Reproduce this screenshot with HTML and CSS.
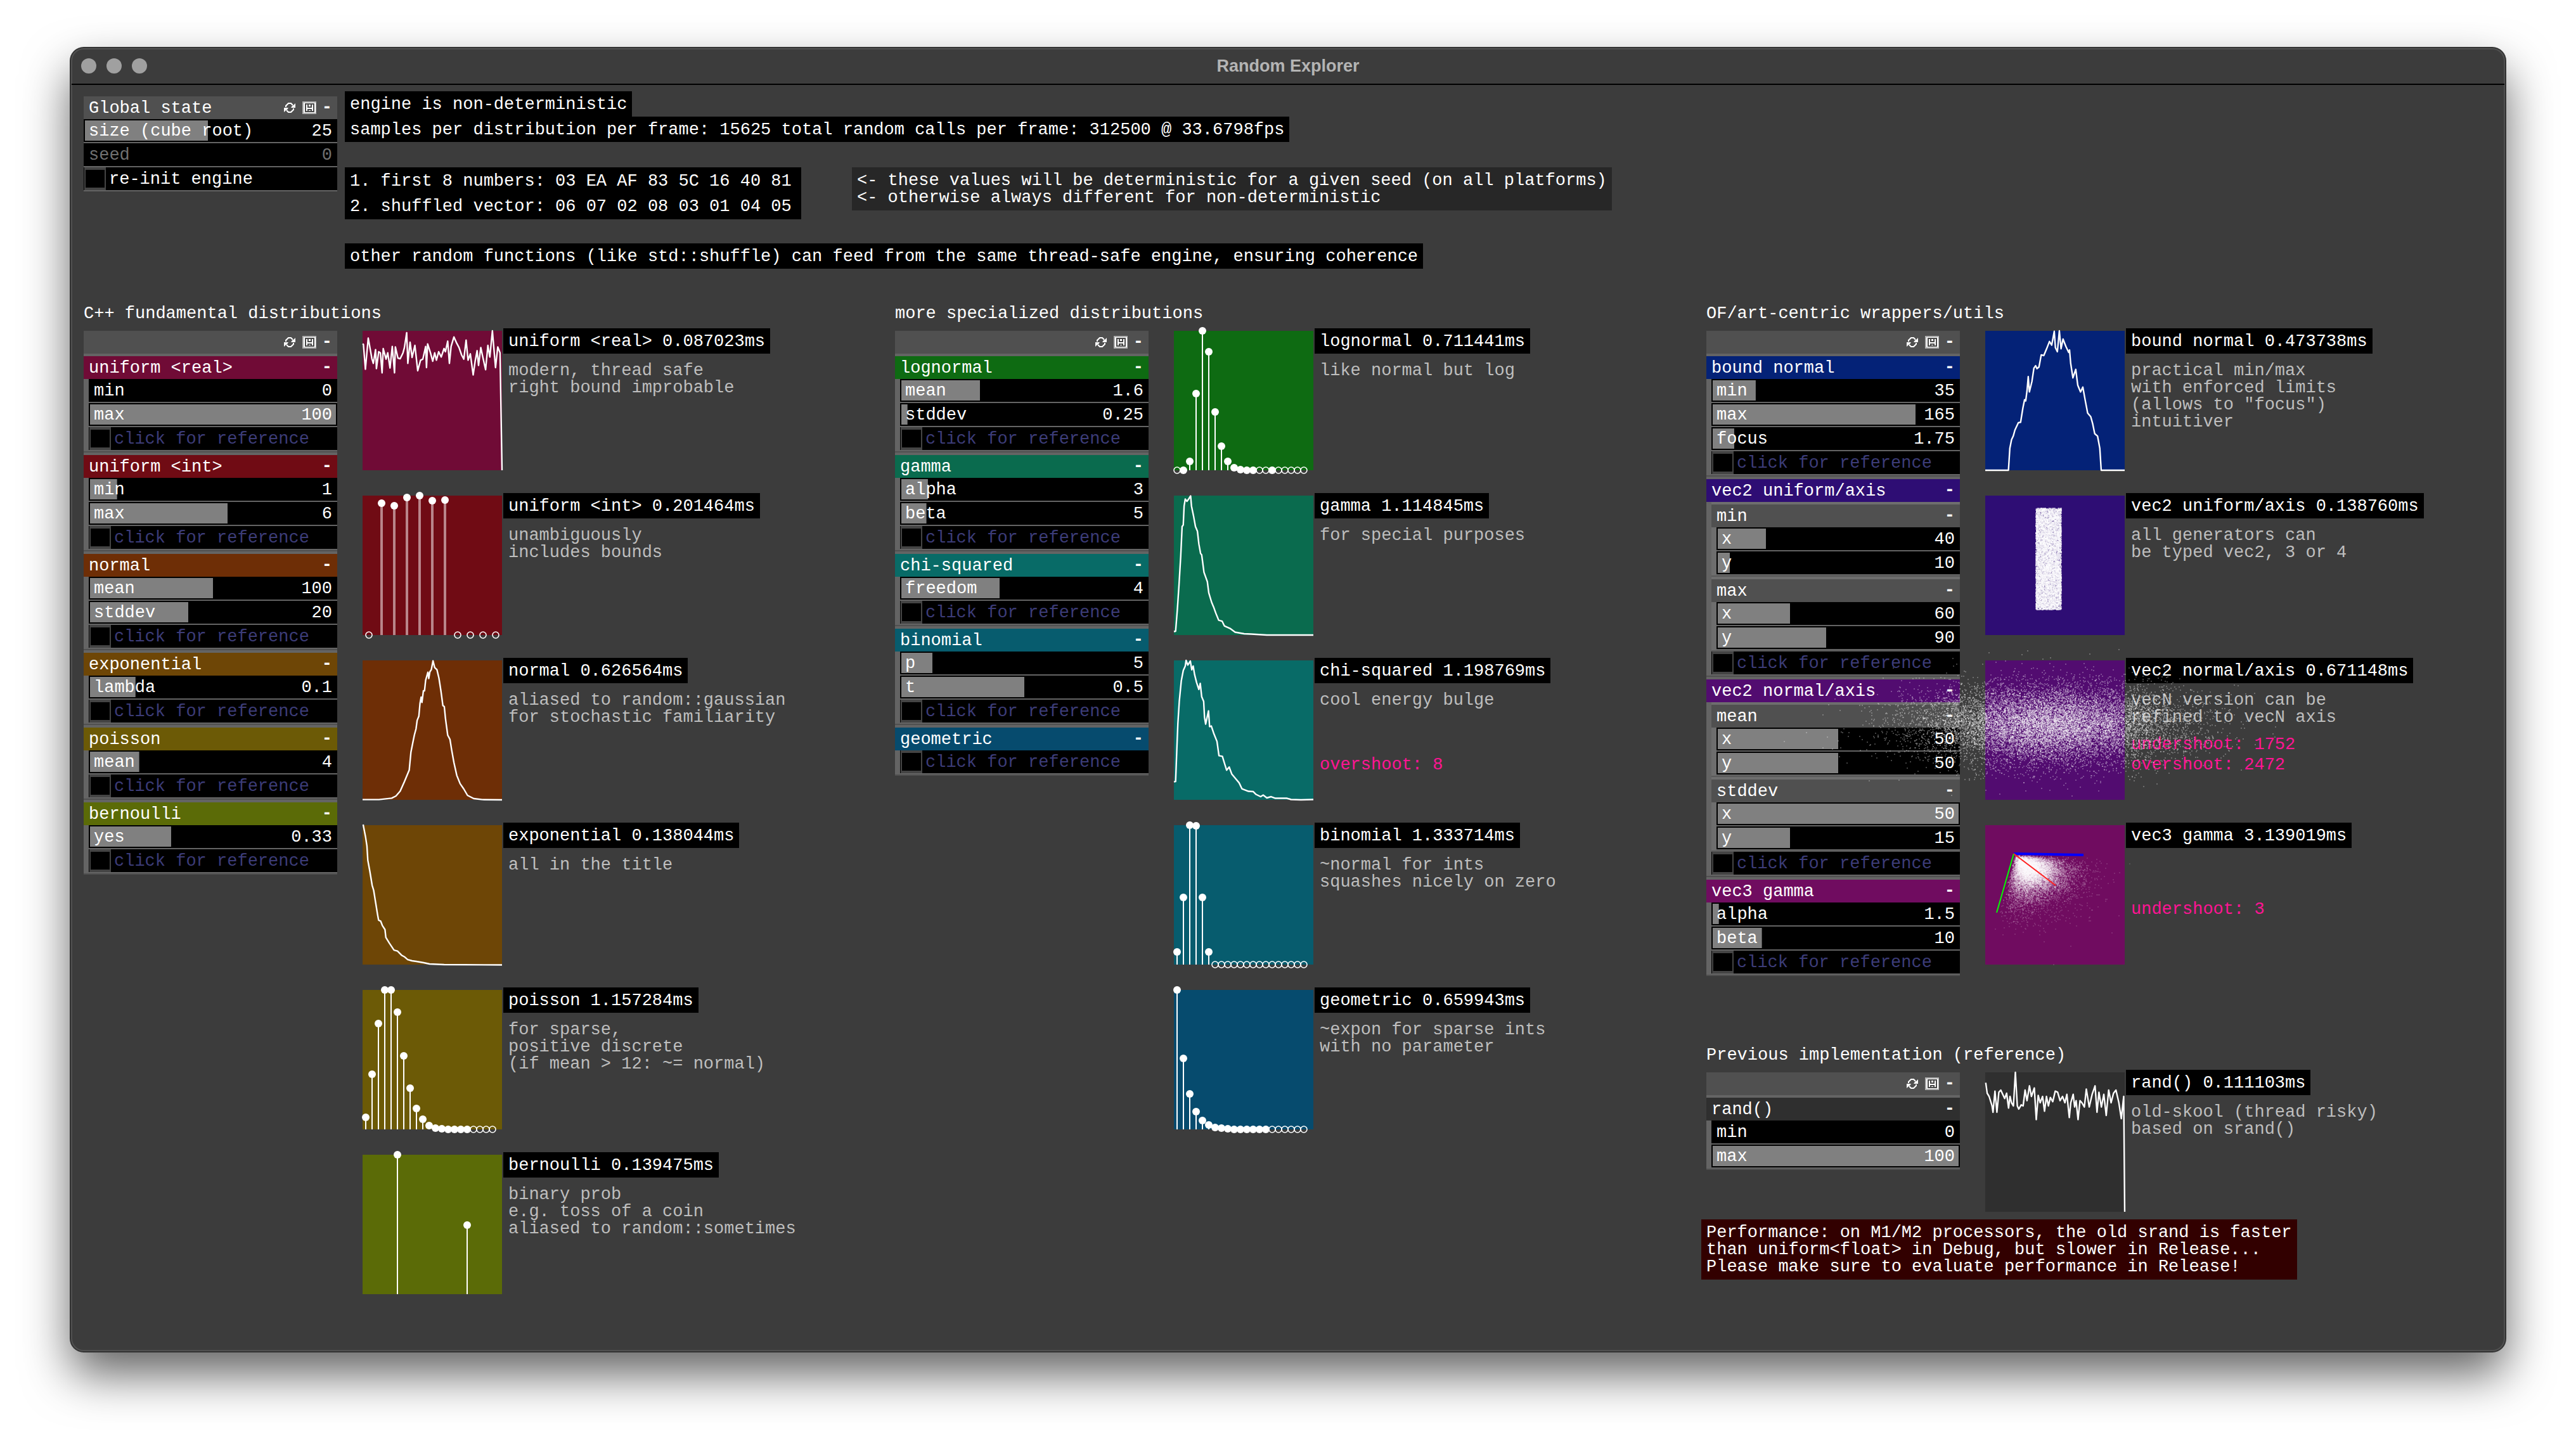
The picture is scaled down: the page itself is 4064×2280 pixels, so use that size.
FILE: index.html
```html
<!DOCTYPE html>
<html lang="en">
<head>
<meta charset="utf-8">
<title>Random Explorer</title>
<link rel="stylesheet" href="styles.css">
</head>
<body>
<svg class="sprite" aria-hidden="true">
  <symbol id="icon-refresh" viewBox="0 0 22 20">
    <path d="M5 9V7L9 3h4l3 3M17 11v2l-4 4H9l-3-3" fill="none" stroke="#fff" stroke-width="2"/>
    <path d="M20 3v7h-7l2-3 2-1zM2 17v-7h7l-2 3-2 1z" fill="#fff"/>
  </symbol>
  <symbol id="icon-save" viewBox="0 0 22 20">
    <path d="M0 0h22v20H0z" fill="#b0b0b0"/>
    <path d="M2 2h19v16H2z" fill="#fff"/>
    <path d="M5 4h13v12H5zM9 4v5h5V4M9 16v-3h5v3" fill="none" stroke="#4a4a4a" stroke-width="2"/>
  </symbol>
</svg>

<div class="window">
  <header class="titlebar">
    <div class="lights">
      <button type="button" aria-label="Close"></button>
      <button type="button" aria-label="Minimize"></button>
      <button type="button" aria-label="Zoom"></button>
    </div>
    <h1>Random Explorer</h1>
  </header>

  <main>
    <section class="intro">
      <div class="panel">
        <div class="bar"><h3>Global state</h3><button type="button" aria-label="Reload"><svg><use href="#icon-refresh"/></svg></button><button type="button" aria-label="Save"><svg><use href="#icon-save"/></svg></button><button type="button" class="fold">-</button></div>
        <label class="row"><input type="range" min="1" max="50" value="25" style="--v:49%"><span>size (cube root)</span><output>25</output></label>
        <label class="row off"><input type="range" disabled value="0" style="--v:0%"><span>seed</span><output>0</output></label>
        <label class="row tick plain"><input type="checkbox"><span>re-init engine</span></label>
      </div>
      <div class="facts">
        <p class="box">engine is non-deterministic</p>
        <p class="box">samples per distribution per frame: 15625 total random calls per frame: 312500 @ 33.6798fps</p>
        <div class="pair">
          <p class="box seq">1. first 8 numbers: 03 EA AF 83 5C 16 40 81<br>2. shuffled vector: 06 07 02 08 03 01 04 05</p>
          <p class="note">&lt;- these values will be deterministic for a given seed (on all platforms)<br>&lt;- otherwise always different for non-deterministic</p>
        </div>
        <p class="box">other random functions (like std::shuffle) can feed from the same thread-safe engine, ensuring coherence</p>
      </div>
    </section>

    <div class="columns">
      <section class="column">
        <h2>C++ fundamental distributions</h2>
        <div class="split">
          <div class="panel">
            <div class="bar"><h3></h3><button type="button" aria-label="Reload"><svg><use href="#icon-refresh"/></svg></button><button type="button" aria-label="Save"><svg><use href="#icon-save"/></svg></button><button type="button" class="fold">-</button></div>
            <div class="group">
              <div class="bar c-real"><h3>uniform &lt;real&gt;</h3><button type="button" class="fold">-</button></div>
              <div class="rows">
                <label class="row"><input type="range" value="0" style="--v:0%"><span>min</span><output>0</output></label>
                <label class="row"><input type="range" value="100" style="--v:100%"><span>max</span><output>100</output></label>
                <label class="row tick"><input type="checkbox"><span>click for reference</span></label>
              </div>
            </div>
            <div class="group">
              <div class="bar c-int"><h3>uniform &lt;int&gt;</h3><button type="button" class="fold">-</button></div>
              <div class="rows">
                <label class="row"><input type="range" value="11" style="--v:11%"><span>min</span><output>1</output></label>
                <label class="row"><input type="range" value="56" style="--v:56%"><span>max</span><output>6</output></label>
                <label class="row tick"><input type="checkbox"><span>click for reference</span></label>
              </div>
            </div>
            <div class="group">
              <div class="bar c-normal"><h3>normal</h3><button type="button" class="fold">-</button></div>
              <div class="rows">
                <label class="row"><input type="range" value="50" style="--v:50%"><span>mean</span><output>100</output></label>
                <label class="row"><input type="range" value="40" style="--v:40%"><span>stddev</span><output>20</output></label>
                <label class="row tick"><input type="checkbox"><span>click for reference</span></label>
              </div>
            </div>
            <div class="group">
              <div class="bar c-expo"><h3>exponential</h3><button type="button" class="fold">-</button></div>
              <div class="rows">
                <label class="row"><input type="range" value="18" style="--v:18.5%"><span>lambda</span><output>0.1</output></label>
                <label class="row tick"><input type="checkbox"><span>click for reference</span></label>
              </div>
            </div>
            <div class="group">
              <div class="bar c-poisson"><h3>poisson</h3><button type="button" class="fold">-</button></div>
              <div class="rows">
                <label class="row"><input type="range" value="20" style="--v:20%"><span>mean</span><output>4</output></label>
                <label class="row tick"><input type="checkbox"><span>click for reference</span></label>
              </div>
            </div>
            <div class="group">
              <div class="bar c-bern"><h3>bernoulli</h3><button type="button" class="fold">-</button></div>
              <div class="rows">
                <label class="row"><input type="range" value="33" style="--v:33%"><span>yes</span><output>0.33</output></label>
                <label class="row tick"><input type="checkbox"><span>click for reference</span></label>
              </div>
            </div>
          </div>
          <div class="plots">
            <figure>
              <svg class="plot c-real" viewBox="1057 186 493 660" preserveAspectRatio="none"><polyline points="1057,248 1060,250 1067,368 1077,220 1090,318 1095,340 1103,275 1106,365 1114,285 1120,290 1126,385 1130,270 1140,320 1146,290 1154,362 1162,260 1170,385 1173,262 1182,315 1190,318 1200,290 1205,265 1213,195 1217,340 1225,240 1232,312 1242,255 1252,375 1262,325 1270,320 1280,260 1283,360 1287,248 1297,290 1305,330 1312,290 1318,325 1326,285 1335,310 1345,270 1350,285 1358,235 1364,340 1370,260 1380,215 1390,245 1398,265 1407,300 1415,320 1423,230 1430,325 1438,295 1448,395 1455,330 1462,280 1467,350 1475,265 1482,310 1492,370 1500,255 1507,310 1516,186 1520,250 1527,360 1535,262 1543,290 1550,846"/></svg>
              <figcaption><h4>uniform &lt;real&gt; 0.087023ms</h4><p>modern, thread safe<br>right bound improbable</p></figcaption>
            </figure>
            <figure>
              <svg class="plot c-int" viewBox="0 0 220 220" data-step="20" data-width="4" data-tops="-,12,16,3,0,8,7,-,-,-,-"></svg>
              <figcaption><h4>uniform &lt;int&gt; 0.201464ms</h4><p>unambiguously<br>includes bounds</p></figcaption>
            </figure>
            <figure>
              <svg class="plot c-normal" viewBox="1057 426 493 660" preserveAspectRatio="none"><polyline points="1057,1085 1115,1085 1160,1078 1175,1068 1190,1045 1205,1000 1222,945 1228,860 1234,820 1240,780 1246,750 1250,710 1256,690 1260,630 1264,600 1267,625 1272,570 1276,570 1280,520 1288,482 1291,512 1295,480 1300,470 1306,428 1312,460 1320,470 1327,510 1334,570 1341,640 1346,645 1350,700 1358,780 1366,800 1372,850 1380,910 1390,970 1402,1010 1415,1035 1428,1065 1450,1080 1480,1085 1550,1086"/></svg>
              <figcaption><h4>normal 0.626564ms</h4><p>aliased to random::gaussian<br>for stochastic familiarity</p></figcaption>
            </figure>
            <figure>
              <svg class="plot c-expo" viewBox="70 44 479 442" preserveAspectRatio="none"><polyline points="72,42 80,80 85,110 88,155 95,190 103,235 108,250 115,290 122,330 125,345 132,348 138,362 147,375 150,400 162,418 178,440 190,443 205,457 215,462 225,470 240,474 255,476 280,480 300,484 350,486 549,487"/></svg>
              <figcaption><h4>exponential 0.138044ms</h4><p>all in the title</p></figcaption>
            </figure>
            <figure>
              <svg class="plot c-poisson" viewBox="0 0 220 220" data-step="10" data-width="2" data-tops="201,133,53,0,0,35,104,155,187,204,214,218,219,220,220,220,220,-,-,-,-"></svg>
              <figcaption><h4>poisson 1.157284ms</h4><p>for sparse,<br>positive discrete<br>(if mean &gt; 12: ~= normal)</p></figcaption>
            </figure>
            <figure>
              <svg class="plot c-bern" viewBox="0 0 220 220" data-step="110" data-width="2" data-tops="0,111"></svg>
              <figcaption><h4>bernoulli 0.139475ms</h4><p>binary prob<br>e.g. toss of a coin<br>aliased to random::sometimes</p></figcaption>
            </figure>
          </div>
        </div>
      </section>

      <section class="column">
        <h2>more specialized distributions</h2>
        <div class="split">
          <div class="panel">
            <div class="bar"><h3></h3><button type="button" aria-label="Reload"><svg><use href="#icon-refresh"/></svg></button><button type="button" aria-label="Save"><svg><use href="#icon-save"/></svg></button><button type="button" class="fold">-</button></div>
            <div class="group">
              <div class="bar c-logn"><h3>lognormal</h3><button type="button" class="fold">-</button></div>
              <div class="rows">
                <label class="row"><input type="range" value="32" style="--v:32%"><span>mean</span><output>1.6</output></label>
                <label class="row"><input type="range" value="2" style="--v:2.5%"><span>stddev</span><output>0.25</output></label>
                <label class="row tick"><input type="checkbox"><span>click for reference</span></label>
              </div>
            </div>
            <div class="group">
              <div class="bar c-gamma"><h3>gamma</h3><button type="button" class="fold">-</button></div>
              <div class="rows">
                <label class="row"><input type="range" value="11" style="--v:10.8%"><span>alpha</span><output>3</output></label>
                <label class="row"><input type="range" value="10" style="--v:10.2%"><span>beta</span><output>5</output></label>
                <label class="row tick"><input type="checkbox"><span>click for reference</span></label>
              </div>
            </div>
            <div class="group">
              <div class="bar c-chi"><h3>chi-squared</h3><button type="button" class="fold">-</button></div>
              <div class="rows">
                <label class="row"><input type="range" value="40" style="--v:40%"><span>freedom</span><output>4</output></label>
                <label class="row tick"><input type="checkbox"><span>click for reference</span></label>
              </div>
            </div>
            <div class="group">
              <div class="bar c-bino"><h3>binomial</h3><button type="button" class="fold">-</button></div>
              <div class="rows">
                <label class="row"><input type="range" value="13" style="--v:12.7%"><span>p</span><output>5</output></label>
                <label class="row"><input type="range" value="50" style="--v:50%"><span>t</span><output>0.5</output></label>
                <label class="row tick"><input type="checkbox"><span>click for reference</span></label>
              </div>
            </div>
            <div class="group">
              <div class="bar c-geom"><h3>geometric</h3><button type="button" class="fold">-</button></div>
              <div class="rows">
                <label class="row tick"><input type="checkbox"><span>click for reference</span></label>
              </div>
            </div>
          </div>
          <div class="plots">
            <figure>
              <svg class="plot c-logn" viewBox="0 0 220 220" data-step="10" data-width="2" data-tops="-,220,206,99,0,33,128,182,206,216,219,220,220,-,-,220,-,-,-,-,-"></svg>
              <figcaption><h4>lognormal 0.711441ms</h4><p>like normal but log</p></figcaption>
            </figure>
            <figure>
              <svg class="plot c-gamma" viewBox="72 567 492 442" preserveAspectRatio="none"><polyline points="72,998 78,997 84,930 90,850 96,760 101,665 105,660 108,600 112,578 118,585 124,578 131,568 134,600 142,635 148,665 155,680 160,720 166,750 170,755 173,775 178,810 190,840 195,875 205,905 212,920 220,940 230,962 242,965 250,980 270,988 288,1000 320,1005 345,1006 400,1009 564,1009"/></svg>
              <figcaption><h4>gamma 1.114845ms</h4><p>for special purposes</p></figcaption>
            </figure>
            <figure>
              <svg class="plot c-chi" viewBox="72 1090 492 442" preserveAspectRatio="none"><polyline points="72,1475 78,1474 82,1380 86,1290 91,1220 98,1155 105,1122 112,1108 115,1090 121,1105 130,1092 135,1120 140,1108 145,1135 152,1160 160,1182 165,1163 170,1205 177,1220 180,1270 184,1292 194,1250 198,1300 204,1298 212,1320 224,1347 231,1392 243,1394 250,1415 258,1438 267,1428 276,1450 290,1465 302,1478 312,1497 335,1505 352,1506 362,1515 378,1522 387,1517 400,1526 415,1522 430,1527 470,1527 485,1531 520,1532 564,1531"/></svg>
              <figcaption><h4>chi-squared 1.198769ms</h4><p>cool energy bulge</p><ul><li class="over">overshoot: 8</li></ul></figcaption>
            </figure>
            <figure>
              <svg class="plot c-bino" viewBox="0 0 220 220" data-step="10" data-width="2" data-tops="200,114,0,1,114,200,-,-,-,-,-,-,-,-,-,-,-,-,-,-,-"></svg>
              <figcaption><h4>binomial 1.333714ms</h4><p>~normal for ints<br>squashes nicely on zero</p></figcaption>
            </figure>
            <figure>
              <svg class="plot c-geom" viewBox="0 0 220 220" data-step="10" data-width="2" data-tops="0,108,164,192,206,213,217,218,219,220,220,220,220,220,220,-,-,-,-,-,-"></svg>
              <figcaption><h4>geometric 0.659943ms</h4><p>~expon for sparse ints<br>with no parameter</p></figcaption>
            </figure>
          </div>
        </div>
      </section>

      <section class="column">
        <h2>OF/art-centric wrappers/utils</h2>
        <div class="split">
          <div class="panel">
            <div class="bar"><h3></h3><button type="button" aria-label="Reload"><svg><use href="#icon-refresh"/></svg></button><button type="button" aria-label="Save"><svg><use href="#icon-save"/></svg></button><button type="button" class="fold">-</button></div>
            <div class="group">
              <div class="bar c-bound"><h3>bound normal</h3><button type="button" class="fold">-</button></div>
              <div class="rows">
                <label class="row"><input type="range" value="17" style="--v:17.5%"><span>min</span><output>35</output></label>
                <label class="row"><input type="range" value="82" style="--v:82.5%"><span>max</span><output>165</output></label>
                <label class="row"><input type="range" value="9" style="--v:8.75%"><span>focus</span><output>1.75</output></label>
                <label class="row tick"><input type="checkbox"><span>click for reference</span></label>
              </div>
            </div>
            <div class="group">
              <div class="bar c-vecu"><h3>vec2 uniform/axis</h3><button type="button" class="fold">-</button></div>
              <div class="rows">
                <div class="group nested">
                  <div class="bar"><h3>min</h3><button type="button" class="fold">-</button></div>
                  <div class="rows">
                    <label class="row"><input type="range" value="20" style="--v:20%"><span>x</span><output>40</output></label>
                    <label class="row"><input type="range" value="5" style="--v:5%"><span>y</span><output>10</output></label>
                  </div>
                </div>
                <div class="group nested">
                  <div class="bar"><h3>max</h3><button type="button" class="fold">-</button></div>
                  <div class="rows">
                    <label class="row"><input type="range" value="30" style="--v:30%"><span>x</span><output>60</output></label>
                    <label class="row"><input type="range" value="45" style="--v:45%"><span>y</span><output>90</output></label>
                  </div>
                </div>
                <label class="row tick"><input type="checkbox"><span>click for reference</span></label>
              </div>
            </div>
            <div class="group">
              <div class="bar c-vecn"><h3>vec2 normal/axis</h3><button type="button" class="fold">-</button></div>
              <div class="rows">
                <div class="group nested">
                  <div class="bar"><h3>mean</h3><button type="button" class="fold">-</button></div>
                  <div class="rows">
                    <label class="row"><input type="range" value="50" style="--v:50%"><span>x</span><output>50</output></label>
                    <label class="row"><input type="range" value="50" style="--v:50%"><span>y</span><output>50</output></label>
                  </div>
                </div>
                <div class="group nested">
                  <div class="bar"><h3>stddev</h3><button type="button" class="fold">-</button></div>
                  <div class="rows">
                    <label class="row"><input type="range" value="100" style="--v:100%"><span>x</span><output>50</output></label>
                    <label class="row"><input type="range" value="30" style="--v:30%"><span>y</span><output>15</output></label>
                  </div>
                </div>
                <label class="row tick"><input type="checkbox"><span>click for reference</span></label>
              </div>
            </div>
            <div class="group">
              <div class="bar c-vec3"><h3>vec3 gamma</h3><button type="button" class="fold">-</button></div>
              <div class="rows">
                <label class="row"><input type="range" value="2" style="--v:2.5%"><span>alpha</span><output>1.5</output></label>
                <label class="row"><input type="range" value="20" style="--v:20%"><span>beta</span><output>10</output></label>
                <label class="row tick"><input type="checkbox"><span>click for reference</span></label>
              </div>
            </div>
          </div>
          <div class="plots">
            <figure>
              <svg class="plot c-bound" viewBox="1035 136 493 575" preserveAspectRatio="none"><polyline points="1035,711 1117,711 1122,620 1128,585 1134,570 1140,545 1152,515 1160,513 1168,455 1174,420 1178,425 1183,380 1187,325 1191,388 1200,345 1207,290 1213,280 1218,292 1225,285 1233,235 1242,238 1252,210 1262,180 1270,195 1279,138 1283,205 1290,222 1297,136 1303,210 1310,170 1320,200 1330,225 1333,215 1337,270 1345,330 1355,295 1362,360 1372,388 1380,368 1388,420 1397,475 1408,490 1415,520 1422,560 1432,570 1440,620 1445,711 1528,711"/></svg>
              <figcaption><h4>bound normal 0.473738ms</h4><p>practical min/max<br>with enforced limits<br>(allows to "focus")<br>intuitiver</p></figcaption>
            </figure>
            <figure>
              <div class="plot c-vecu"><canvas class="cloud" data-cloud="uniform" width="860" height="620"></canvas></div>
              <figcaption><h4>vec2 uniform/axis 0.138760ms</h4><p>all generators can<br>be typed vec2, 3 or 4</p></figcaption>
            </figure>
            <figure>
              <div class="plot c-vecn"><canvas class="cloud" data-cloud="normal" width="860" height="620"></canvas></div>
              <figcaption><h4>vec2 normal/axis 0.671148ms</h4><p>vecN version can be<br>refined to vecN axis</p><ul><li>undershoot: 1752</li><li class="over">overshoot: 2472</li></ul></figcaption>
            </figure>
            <figure>
              <div class="plot c-vec3"><canvas class="cloud" data-cloud="gamma" width="860" height="620"></canvas></div>
              <figcaption><h4>vec3 gamma 3.139019ms</h4><p></p><ul><li>undershoot: 3</li></ul></figcaption>
            </figure>
          </div>
        </div>

        <h2 class="later">Previous implementation (reference)</h2>
        <div class="split">
          <div class="panel">
            <div class="bar"><h3></h3><button type="button" aria-label="Reload"><svg><use href="#icon-refresh"/></svg></button><button type="button" aria-label="Save"><svg><use href="#icon-save"/></svg></button><button type="button" class="fold">-</button></div>
            <div class="group">
              <div class="bar c-rand"><h3>rand()</h3><button type="button" class="fold">-</button></div>
              <div class="rows">
                <label class="row"><input type="range" value="0" style="--v:0%"><span>min</span><output>0</output></label>
                <label class="row"><input type="range" value="100" style="--v:100%"><span>max</span><output>100</output></label>
              </div>
            </div>
          </div>
          <div class="plots">
            <figure>
              <svg class="plot c-rand" viewBox="604 186 287 660" preserveAspectRatio="none"><polyline points="605,235 608,285 612,300 616,330 618,345 620,375 624,275 628,375 632,280 636,270 640,290 644,310 648,285 652,355 655,300 658,330 662,345 666,186 670,345 673,360 678,340 682,345 686,270 690,320 695,250 699,300 705,260 709,410 713,295 717,330 722,300 726,370 730,300 734,345 738,305 743,325 748,275 753,280 758,320 763,300 768,330 772,290 777,400 780,330 785,290 788,350 791,320 795,410 799,320 803,330 808,350 812,265 818,350 824,290 830,250 834,375 838,280 843,350 848,290 853,390 858,270 863,330 868,285 873,270 879,330 884,405 889,300 891,846"/></svg>
              <figcaption><h4>rand() 0.111103ms</h4><p>old-skool (thread risky)<br>based on srand()</p></figcaption>
            </figure>
          </div>
        </div>
        <p class="note warning">Performance: on M1/M2 processors, the old srand is faster<br>than uniform&lt;float&gt; in Debug, but slower in Release...<br>Please make sure to evaluate performance in Release!</p>
      </section>
    </div>
  </main>
</div>
<script src="plots.js"></script>
</body>
</html>
```
FILE: styles.css
```css
* { box-sizing: border-box; }

body {
  margin: 0;
  padding: 76px 112px 148px;
  min-height: 100vh;
  display: flex;
  background: #fff;
  color: #fff;
  font: 27px/27px "Liberation Mono", monospace;
}

h1, h2, h3, h4, p, ul, figure { margin: 0; padding: 0; font: inherit; }
button { border: 0; padding: 0; background: none; color: inherit; font: inherit; }
.sprite { display: none; }

.window {
  flex: 1;
  min-width: 0;
  border-radius: 20px;
  background: #3c3c3c;
  box-shadow: inset 0 0 0 2px #505050, 0 0 0 2px #333, 0 36px 74px rgba(0, 0, 0, .62);
}

.titlebar {
  display: grid;
  grid-template-columns: 1fr auto 1fr;
  align-items: center;
  height: 58px;
  margin: 0 1px;
  padding: 0 15px;
  border-bottom: 2px solid #000;
}
.titlebar h1 { color: #b4b4b4; font: bold 27px/32px "Liberation Sans", sans-serif; }
.lights { display: flex; gap: 16px; }
.lights button { width: 24px; height: 24px; border-radius: 50%; background: #a0a0a0; }

.intro { display: flex; align-items: flex-start; gap: 12px; padding: 10px 20px 0; }
.intro .panel { margin-top: 8px; }
.facts { display: flex; flex-direction: column; align-items: flex-start; }
.pair { display: flex; align-items: flex-start; gap: 80px; height: 80px; margin: 40px 0; }
.box { padding: 2px 8px 0; background: #000; line-height: 38px; white-space: nowrap; }
.seq { width: 720px; line-height: 40px; }
.note { width: fit-content; padding: 8px 8px 6px; background: #272727; white-space: nowrap; }
.warning { margin: 12px 0 0 -8px; background: #320000; }

.columns { display: grid; grid-template-columns: repeat(3, minmax(0, 1fr)); margin-top: 52px; }
.column { padding-left: 20px; }
.column h2 { margin-bottom: 8px; line-height: 38px; }
.column .later { margin-top: 106px; }
.split { display: flex; align-items: flex-start; gap: 40px; }

.panel { flex: none; width: 400px; }
.bar {
  display: flex;
  align-items: center;
  gap: 9px;
  height: 36px;
  padding: 0 8px;
  background: #505050;
}
.bar h3 { flex: 1; padding-top: 2px; line-height: 36px; }
.bar svg { display: block; width: 22px; height: 20px; }
.fold { font-weight: bold; }

.group { border-top: 4px solid #646464; border-bottom: 2px solid #505050; background: #646464; }
.nested { border-color: #6e6e6e #6e6e6e #5a5a5a; background: #6e6e6e; }
.rows { padding-left: 8px; }

.row {
  display: grid;
  grid-template-columns: 1fr auto;
  grid-template-rows: 36px;
  height: 38px;
  border-bottom: 2px solid #646464;
  background: #000;
  line-height: 38px;
}
.row > * { grid-row: 1; }
.row span { grid-column: 1; padding-left: 8px; }
.row output { grid-column: 2; padding-right: 8px; }
.row input[type="range"] {
  appearance: none;
  grid-column: 1 / -1;
  min-width: 0;
  margin: 2px;
  background: linear-gradient(#808080, #808080) no-repeat 0 0 / var(--v) 100%;
}
.row input::-webkit-slider-thumb { appearance: none; width: 0; height: 0; }
.row input::-moz-range-thumb { width: 0; height: 0; border: 0; }
.off { color: #707070; }

.tick { grid-template-columns: 40px 1fr; color: #3c3c78; }
.tick.plain { color: #fff; }
.tick input {
  appearance: none;
  width: 34px;
  height: 36px;
  margin: 0 0 0 1px;
  border: solid #444;
  border-width: 4px 2px;
}
.tick span { grid-column: 2; padding-left: 0; }

.plots { display: grid; gap: 40px; }
figure { display: flex; align-items: flex-start; gap: 2px; height: 220px; }
.plot { position: relative; flex: none; width: 220px; height: 220px; overflow: visible; }
.plot polyline {
  fill: none;
  stroke: #fff;
  stroke-width: 2.4;
  stroke-linejoin: round;
  vector-effect: non-scaling-stroke;
}
/* point clouds spill past their tile, over the neighbouring widgets */
.cloud { position: absolute; left: -320px; top: -200px; pointer-events: none; }

figcaption { display: grid; grid-template-rows: 40px 81px auto; margin-top: -4px; white-space: nowrap; }
figcaption h4 { width: fit-content; padding: 2px 8px 0; background: #000; line-height: 38px; }
figcaption p { padding: 14px 8px 0; color: #bebebe; }
figcaption ul {
  display: grid;
  grid-template-rows: 32px 32px;
  padding-left: 8px;
  color: #ff1493;
  line-height: 32px;
  list-style: none;
}
.over { grid-row: 2; }

.c-real { background: #700b36; }
.c-int { background: #700b14; }
.c-normal { background: #6e2e06; }
.c-expo { background: #6e4606; }
.c-poisson { background: #6c5a06; }
.c-bern { background: #5b6b07; }
.c-logn { background: #0e6b12; }
.c-gamma { background: #0a6b4e; }
.c-chi { background: #086b67; }
.c-bino { background: #075c6e; }
.c-geom { background: #064b6e; }
.c-bound { background: #042277; }
.c-vecu { background: #2e0d74; }
.c-vecn { background: #520c70; }
.c-vec3 { background: #700c60; }
.c-rand { background: #2f2f2f; }
```
FILE: plots.js
```js
// Stem plots: one stem per data-tops entry, "-" marks an empty bin.
document.querySelectorAll('[data-tops]').forEach(svg => {
  const step = +svg.dataset.step, width = +svg.dataset.width;
  const color = width > 2 ? '#b9858a' : '#fff';
  svg.innerHTML = svg.dataset.tops.split(',').map((top, i) => {
    const x = step * i + step / 2;
    return top === '-'
      ? `<circle cx="${x}" cy="220" r="5" fill="none" stroke="#fff" stroke-width="1.6"/>`
      : `<path d="M${x} 220V${top}" stroke="${color}" stroke-width="${width}"/><circle cx="${x}" cy="${top}" r="6" fill="#fff"/>`;
  }).join('');
});

// Point clouds, drawn from a seeded generator.
let state = 12345;
const rnd = () => {
  state = (state + 0x6D2B79F5) | 0;
  let t = Math.imul(state ^ (state >>> 15), 1 | state);
  t = (t + Math.imul(t ^ (t >>> 7), 61 | t)) ^ t;
  return (((t ^ (t >>> 14)) >>> 0) + 1) / 4294967297;
};
const gauss = () => Math.sqrt(-2 * Math.log(rnd())) * Math.cos(2 * Math.PI * rnd());
const gamma = () => 0.14 * (-Math.log(rnd()) + gauss() ** 2 / 2);

const clouds = {
  uniform: () => [79 + 40 * rnd(), 19 + 160 * rnd()],
  normal: () => [100 + 100 * gauss(), 100 + 30 * gauss()],
  gamma: () => {
    const a = gamma(), b = gamma(), c = gamma();
    return [45 + 66 * a - 27 * b + 110 * c, 45 + 50 * a + 93 * b + 2 * c];
  }
};

document.querySelectorAll('[data-cloud]').forEach(canvas => {
  const ctx = canvas.getContext('2d');
  const kind = canvas.dataset.cloud;
  ctx.translate(320, 200);
  ctx.fillStyle = kind === 'gamma' ? 'rgba(255,255,255,.12)' : 'rgba(255,255,255,.25)';
  for (let i = 0; i < 15625; i++) {
    const [x, y] = clouds[kind]();
    ctx.fillRect(Math.round(x), Math.round(y), 2, 2);
  }
  if (kind === 'gamma') {
    [['#0000ff', 155, 47, 4], ['#00ff00', 18, 138, 2], ['#ff2020', 111, 95, 2]].forEach(([color, x, y, w]) => {
      ctx.strokeStyle = color;
      ctx.lineWidth = w;
      ctx.beginPath();
      ctx.moveTo(45, 45);
      ctx.lineTo(x, y);
      ctx.stroke();
    });
  }
});
```
